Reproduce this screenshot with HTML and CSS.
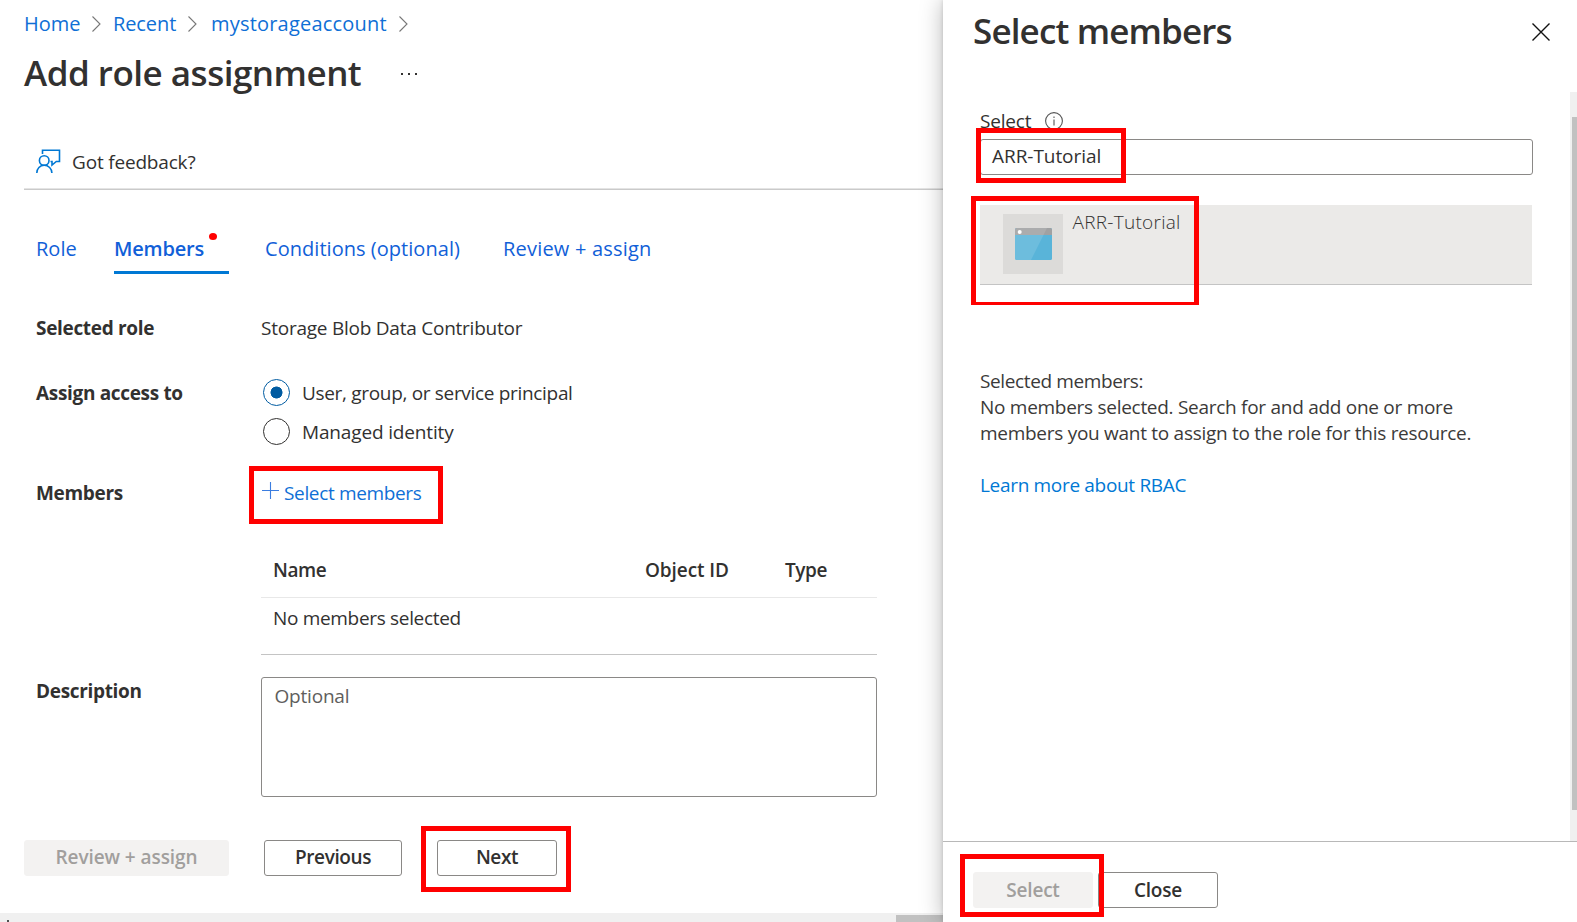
FILE: index.html
```html
<!DOCTYPE html>
<html lang="en">
<head>
<meta charset="utf-8">
<title>Add role assignment</title>
<link rel="stylesheet" href="styles.css">
</head>
<body>
<div class="app">
  <main class="page">
    <nav class="crumbs">
      <a class="crumb-home">Home</a>
      <svg class="chev" viewBox="0 0 9 16"><path d="M.5 .5 8 8 .5 15.5"/></svg>
      <a class="crumb-recent">Recent</a>
      <svg class="chev" viewBox="0 0 9 16"><path d="M.5 .5 8 8 .5 15.5"/></svg>
      <a class="crumb-account">mystorageaccount</a>
      <svg class="chev" viewBox="0 0 9 16"><path d="M.5 .5 8 8 .5 15.5"/></svg>
    </nav>
    <header class="title-row">
      <h1 class="title">Add role assignment</h1>
      <svg class="more" viewBox="0 0 18 4"><path d="M1 1h2v2H1zM8 1h2v2H8zM15 1h2v2h-2z"/></svg>
    </header>
    <div class="toolbar">
      <svg class="feedback-icon" viewBox="0 0 25 25"><path d="M6.500 5V1.200h17v11.300h-3.200l-4.300 3.600v-3.600h-1.500"/><circle cx="8.200" cy="11.500" r="4.800"/><path d="M.8 24c0-4.500 3.200-7.700 7.400-7.700s7.700 3.200 7.700 7.700"/></svg>
      <span class="feedback-text">Got feedback?</span>
    </div>
    <div class="tabs">
      <a class="tab tab-role">Role</a>
      <a class="tab tab-members">Members<i class="alert-dot"></i></a>
      <a class="tab tab-conditions">Conditions (optional)</a>
      <a class="tab tab-review">Review + assign</a>
    </div>
    <section class="form">
      <div class="row row-role"><b class="label l-role">Selected role</b><span class="v-role">Storage Blob Data Contributor</span></div>
      <div class="row row-access">
        <b class="label l-access">Assign access to</b>
        <div class="radios">
          <div class="radio"><i class="ring on"></i><span class="r-user">User, group, or service principal</span></div>
          <div class="radio"><i class="ring"></i><span class="r-managed">Managed identity</span></div>
        </div>
      </div>
      <div class="row row-members">
        <b class="label l-members">Members</b>
        <div class="members">
          <a class="add"><svg class="plus" viewBox="0 0 17 17"><path d="M8.500 0v17M0 8.500h17"/></svg><span class="add-text">Select members</span><i class="mark mark-add"></i></a>
          <div class="table">
            <div class="thead"><span class="h-name">Name</span><span class="h-id">Object ID</span><span class="h-type">Type</span></div>
            <div class="tbody"><span class="empty">No members selected</span></div>
          </div>
        </div>
      </div>
      <div class="row row-desc"><b class="label l-desc">Description</b><div class="textarea"><span class="optional">Optional</span></div></div>
    </section>
    <footer class="actions">
      <div class="btn disabled btn-review"><span class="t-review">Review + assign</span></div>
      <div class="btn btn-prev"><span class="t-prev">Previous</span></div>
      <div class="btn btn-next"><span class="t-next">Next</span><i class="mark mark-next"></i></div>
    </footer>
    <div class="hscroll"><i class="hscroll-arrow"></i><i class="hscroll-thumb"></i></div>
  </main>
  <aside class="panel">
    <header class="panel-head">
      <h2 class="panel-title">Select members</h2>
      <svg class="close" viewBox="0 0 18 18"><path d="M.5 .5l17 17M17.500 .5l-17 17"/></svg>
    </header>
    <div class="panel-body">
      <div class="panel-content">
        <div class="field-label"><span class="t-select">Select</span><svg class="info" viewBox="0 0 18 18"><circle cx="9" cy="9" r="8.400"/><path d="M9 7.500v6M9 4.500v1.500"/></svg></div>
        <div class="input"><span class="t-input">ARR-Tutorial</span><i class="mark mark-input"></i></div>
        <div class="result">
          <div class="avatar">
            <svg class="app-icon" viewBox="0 0 37 32"><rect width="37" height="32" rx="1.500" fill="#59b4d9"/><path d="M0 7V1.500Q0 0 1.500 0h34Q37 0 37 1.500V7z" fill="#a0a1a2"/><path d="M1.500 0H32L16 32H1.500Q0 32 0 30.500v-29Q0 0 1.500 0z" fill="#fff" fill-opacity=".12"/><circle cx="4.700" cy="4" r="2" fill="#fff"/></svg>
          </div>
          <span class="t-result">ARR-Tutorial</span>
          <i class="mark mark-result"></i>
        </div>
        <div class="selected">
          <div class="s-one">Selected members:</div>
          <div class="s-two">No members selected. Search for and add one or more</div>
          <div class="s-three">members you want to assign to the role for this resource.</div>
        </div>
        <a class="learn">Learn more about RBAC</a>
      </div>
      <div class="vscroll"><div class="vscroll-thumb"></div></div>
    </div>
    <footer class="panel-foot">
      <div class="btn disabled btn-select"><span class="t-btnselect">Select</span><i class="mark mark-select"></i></div>
      <div class="btn btn-close"><span class="t-close">Close</span></div>
    </footer>
  </aside>
</div>
</body>
</html>
```
FILE: styles.css
```css
* { box-sizing: border-box; }
body { margin: 0; background: #fff; color: #323130; font: 19px/26px "Open Sans", "Noto Sans", sans-serif; letter-spacing: -.28px; }
i { display: block; }
h1, h2 { margin: 0; font-weight: 600; }
svg { display: block; flex: none; }
span, a, b, h1, h2 { white-space: nowrap; }
.app { display: grid; grid-template-columns: 943px 634px; height: 922px; overflow: hidden; }
.page { display: flex; flex-direction: column; padding-top: 11px; height: 922px; overflow: hidden; }

.crumbs { display: flex; height: 26px; padding-left: 24px; color: #0f6fd6; font-size: 20px; letter-spacing: 0; }
.crumbs a { flex: none; }
.crumb-home { width: 68px; }
.crumb-recent { width: 75px; margin-left: 12px; letter-spacing: -.1px; }
.crumb-account { width: 188px; margin-left: 14px; letter-spacing: .2px; }
.chev { width: 9px; height: 16px; margin-top: 5px; fill: none; stroke: #777; stroke-width: 1.100; }

.title-row { display: flex; height: 48px; margin-top: 11px; padding-left: 24px; }
.title { width: 376px; padding-top: 1px; font-size: 35px; line-height: 48px; letter-spacing: -.5px; }
.more { width: 18px; height: 4px; margin-top: 24px; fill: #323130; }

.toolbar { display: flex; height: 41px; margin: 53px 0 0 24px; padding-left: 12px; border-bottom: 1px solid #cacaca; box-shadow: inset 0 -1px #e4e4e4; }
.feedback-icon { width: 25px; height: 25px; margin-right: 11px; fill: none; stroke: #0078d4; stroke-width: 1.600; }
.feedback-text { letter-spacing: -.18px; }

.tabs { display: flex; height: 38px; margin: 46px 0 0 36px; color: #1160d8; font-size: 20px; letter-spacing: 0; }
.tab { flex: none; }
.tab-role { width: 78px; }
.tab-members { position: relative; width: 115px; margin-right: 36px; font-weight: 600; letter-spacing: -.2px; border-bottom: 3px solid #0078d4; }
.tab-conditions { width: 238px; letter-spacing: .04px; }
.tab-review { letter-spacing: .2px; }
.alert-dot { position: absolute; left: 95px; top: -3px; width: 8px; height: 7px; border-radius: 50%; background: #f00; }

.form { padding-left: 36px; margin-top: 41px; }
.label { letter-spacing: -.33px; }
.row { display: grid; grid-template-columns: 225px 616px; }
.row-role { height: 65px; }
.v-role { letter-spacing: -.24px; }
.row-access { height: 100px; }
.row-members { height: 197px; }
.radio { display: flex; align-items: center; height: 26px; margin-bottom: 13px; }
.ring { width: 27px; height: 27px; margin: -1px 12px 0 2px; border: 1px solid #323130; border-radius: 50%; }
.ring.on { border-color: #005ba1; background: radial-gradient(circle, #005ba1 5.700px, transparent 6.300px); }
.r-user { letter-spacing: -.32px; }
.r-managed { letter-spacing: -.15px; }
.add { position: relative; display: flex; width: 160px; height: 26px; color: #0f6fd6; letter-spacing: -.35px; }
.plus { width: 17px; height: 17px; margin: 2px 5.500px 0 .5px; stroke: #3b7de0; stroke-width: 1.100; }
.table { margin-top: 51px; }
.thead { display: flex; height: 41px; padding-left: 12px; border-bottom: 1px solid #e8e8e8; font-weight: 600; letter-spacing: -.4px; }
.h-name { width: 372px; }
.h-id { width: 140px; letter-spacing: -.1px; }
.tbody { height: 57px; padding: 7px 0 0 12px; border-bottom: 1px solid #c4c4c4; letter-spacing: -.32px; }
.row-desc .label { padding-top: 1px; }
.textarea { height: 120px; padding: 5px 0 0 12.500px; border: 1px solid #8a8886; border-radius: 3px; color: #605e5c; letter-spacing: -.2px; }

.actions { display: flex; height: 36px; margin: 43px 0 0 24px; }
.btn { position: relative; display: flex; flex: none; height: 36px; justify-content: center; align-items: center; border: 1px solid #8a8886; border-radius: 3px; font-weight: 600; line-height: 26px; padding-bottom: 2px; letter-spacing: -.4px; }
.disabled { background: #f3f2f1; border-color: #f3f2f1; color: #a19f9d; }
.btn-review { width: 205px; margin-right: 35px; letter-spacing: -.07px; }
.btn-prev { width: 138px; margin-right: 35px; }
.btn-next { width: 120px; }
.hscroll { display: flex; justify-content: space-between; height: 9px; margin-top: 37px; background: #f0f0f0; }
.hscroll-arrow { width: 2px; height: 2px; margin: 7px 0 0 7px; background: #505050; }
.hscroll-thumb { width: 47px; height: 7px; margin-top: 2px; background: #c1c1c1; }

.mark { position: absolute; border: 5px solid #f00; }
.mark-add { left: -12px; top: -14px; width: 194px; height: 58px; }
.mark-next { left: -17px; top: -15px; width: 150px; height: 66px; }
.mark-input { left: -5px; top: -12px; width: 150px; height: 55px; }
.mark-result { left: -9px; top: -9px; width: 228px; height: 109px; border-bottom-width: 3px; }
.mark-select { left: -14px; top: -19px; width: 144px; height: 63px; z-index: 2; }

.panel { position: relative; display: flex; flex-direction: column; background: #fff; box-shadow: 0 0 22px rgba(0,0,0,.28), 0 0 4px rgba(0,0,0,.14); }
.panel-head { display: flex; justify-content: space-between; height: 92px; padding: 5px 27px 0 30px; }
.panel-title { padding-top: 2px; font-size: 35px; line-height: 48px; letter-spacing: -.85px; }
.close { width: 18px; height: 18px; margin-top: 18px; stroke: #111; stroke-width: 1.400; }
.panel-body { display: flex; justify-content: space-between; height: 749px; }
.panel-content { padding: 16px 0 0 37px; }
.field-label { display: flex; height: 31px; letter-spacing: -.2px; }
.t-select { width: 65px; }
.info { width: 18px; height: 18px; margin-top: 4px; fill: none; stroke: #555; stroke-width: 1.100; }
.input { position: relative; width: 553px; height: 36px; padding: 3px 0 0 11px; border: 1px solid #8a8886; border-radius: 3px; letter-spacing: -.05px; }
.result { position: relative; display: flex; width: 552px; height: 80px; margin-top: 30px; padding: 9px 0 0 23px; background: #ebeae8; border-bottom: 1px solid #c4c4c4; }
.avatar { width: 60px; height: 60px; margin-right: 9.500px; padding: 14px 0 0 11.500px; background: #dcdbd9; }
.app-icon { width: 37px; height: 32px; }
.t-result { margin-top: -5px; color: #323130; font-weight: 300; letter-spacing: .28px; }
.selected { margin-top: 83px; color: #3b3a39; }
.s-one { letter-spacing: -.38px; }
.learn { display: block; margin-top: 26px; color: #0078d4; letter-spacing: -.32px; }
.vscroll { width: 7px; padding: 25px 0 0 2px; background: #f0f0f0; }
.vscroll-thumb { height: 693px; background: #c1c1c1; }
.panel-foot { display: flex; gap: 5px; height: 81px; padding: 30px 0 0 30px; border-top: 1px solid #b8b8b8; }
.btn-select, .btn-close { width: 120px; padding-bottom: 0; letter-spacing: -.2px; }
```
